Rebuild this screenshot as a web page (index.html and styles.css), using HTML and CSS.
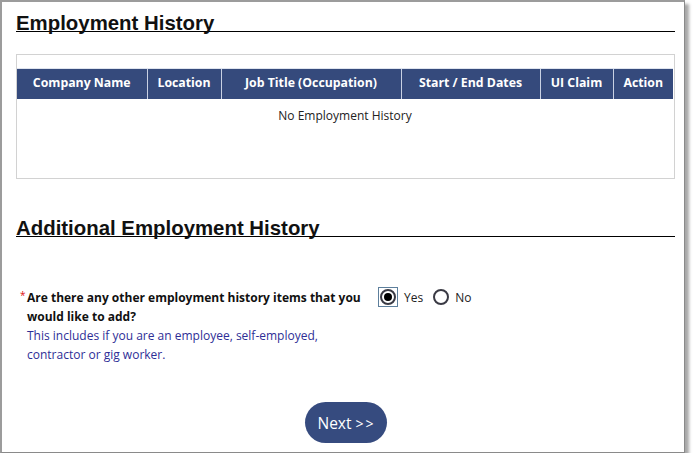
FILE: index.html
```html
<!DOCTYPE html>
<html>
<head>
<meta charset="utf-8">
<link rel="stylesheet" href="styles.css">
</head>
<body>
<div class="frame">
  <h2 class="section-title">Employment History</h2>
  <div class="grid-box">
    <table class="history">
      <colgroup>
        <col class="c1"><col class="c2"><col class="c3"><col class="c4"><col class="c5"><col class="c6">
      </colgroup>
      <thead>
        <tr>
          <th>Company Name</th>
          <th>Location</th>
          <th>Job Title (Occupation)</th>
          <th>Start / End Dates</th>
          <th>UI Claim</th>
          <th>Action</th>
        </tr>
      </thead>
      <tbody>
        <tr><td colspan="6" class="empty">No Employment History</td></tr>
      </tbody>
    </table>
  </div>

  <h2 class="section-title second">Additional Employment History</h2>

  <div class="question">
    <div class="q-label">
      <span class="req">*</span>
      <div class="q-body">
        <div class="q-text">Are there any other employment history items that you would like to add?</div>
        <div class="q-help">This includes if you are an employee, self-employed, contractor or gig worker.</div>
      </div>
    </div>
    <div class="radios">
      <label class="radio">
        <span class="focus"><span class="circle checked"></span></span>
        <span class="radio-text">Yes</span>
      </label>
      <label class="radio">
        <span class="nofocus"><span class="circle"></span></span>
        <span class="radio-text">No</span>
      </label>
    </div>
  </div>

  <div class="actions">
    <button class="next" type="button">Next <span class="arrows">&gt;&gt;</span></button>
  </div>
</div>
</body>
</html>
```

FILE: styles.css
```css
* { box-sizing: border-box; }

html, body {
  margin: 0;
  padding: 0;
  background: #ffffff;
}

.frame {
  width: 685px;
  height: 453px;
  border-left: 2px solid #9c9c9c;
  border-top: 2px solid #9c9c9c;
  border-right: 1px solid #8a8a8a;
  border-bottom: 1px solid #8a8a8a;
  box-shadow: 4px 4px 3px #a8a8a8;
  padding: 13px 9px 0 14px;
  background: #fff;
}

.section-title {
  margin: 0;
  font-family: "Liberation Sans", Arial, sans-serif;
  font-weight: bold;
  font-size: 20.4px;
  line-height: 16px;
  color: #111;
  border-bottom: 1px solid #000;
}

.section-title.second {
  margin-top: 41px;
}

.grid-box {
  margin-top: 22px;
  border: 1px solid #d2d2d2;
  height: 125px;
  padding-top: 13px;
}

.history {
  width: 656px;
  border-collapse: collapse;
  table-layout: fixed;
  font-family: "Open Sans", "Noto Sans", sans-serif;
}

.c1 { width: 130px; }
.c2 { width: 74px; }
.c3 { width: 180px; }
.c4 { width: 139px; }
.c5 { width: 73px; }
.c6 { width: 60px; }

.history th {
  background: #354a7c;
  color: #fff;
  font-size: 12.3px;
  font-weight: bold;
  height: 30px;
  padding: 0 0 3px;
  text-align: center;
  border-left: 1px solid #c9d1e3;
  border-top: 1px solid #dfe4ee;
  white-space: nowrap;
}

.history th:first-child { border-left: none; }

.history td.empty {
  text-align: center;
  font-size: 12px;
  color: #222;
  padding: 8px 0 0;
  vertical-align: top;
  height: 40px;
}

.question {
  margin-top: 51px;
  display: flex;
  align-items: flex-start;
  font-family: "Open Sans", "Noto Sans", sans-serif;
}

.q-label {
  width: 362px;
  display: flex;
  align-items: flex-start;
  padding-left: 4px;
}

.req {
  color: #d11;
  font-size: 10px;
  line-height: 12px;
  width: 7px;
  flex: none;
  margin-top: 1px;
}

.q-body {
  width: 346px;
  flex: none;
}

.q-text {
  font-size: 12px;
  font-weight: bold;
  color: #111;
  line-height: 19px;
}

.q-help {
  font-size: 12px;
  color: #2e2e96;
  line-height: 19px;
}

.radios {
  display: flex;
  align-items: center;
  gap: 10px;
  margin-top: -1px;
}

.radio {
  display: flex;
  align-items: center;
  gap: 6px;
  font-size: 12px;
  color: #222;
}

.focus {
  display: inline-flex;
  border: 1px solid #5d7f9c;
  padding: 1px 1px;
  width: 20px;
  height: 20px;
  align-items: center;
  justify-content: center;
}

.nofocus {
  display: inline-flex;
  width: 16px;
  height: 20px;
  align-items: center;
  justify-content: center;
}

.circle {
  width: 16px;
  height: 16px;
  border: 2px solid #3a3a44;
  border-radius: 50%;
  display: inline-flex;
  align-items: center;
  justify-content: center;
  background: #fff;
}

.circle.checked::after {
  content: "";
  width: 8px;
  height: 8px;
  border-radius: 50%;
  background: #000;
}

.actions {
  margin-top: 38px;
  display: flex;
  justify-content: center;
  width: 659px;
}

.next {
  width: 82px;
  height: 41px;
  border: none;
  border-radius: 21px;
  background: #364b7f;
  color: #fff;
  font-family: "Open Sans", "Noto Sans", sans-serif;
  font-size: 15.5px;
  padding: 0;
}

.arrows {
  font-size: 14px;
  letter-spacing: 2px;
  margin-right: -2px;
}
```
